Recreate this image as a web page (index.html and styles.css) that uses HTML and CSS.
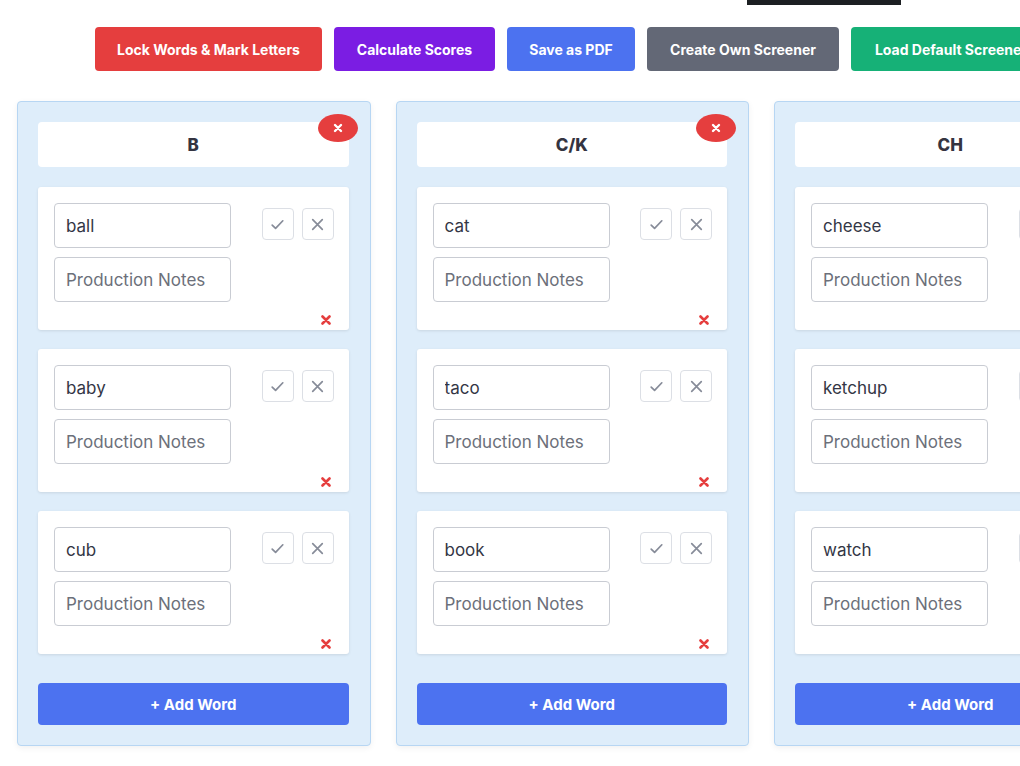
FILE: index.html
```html
<!DOCTYPE html>
<html lang="en">
<head>
<meta charset="UTF-8" />
<title>Articulation Screener</title>
<link rel="stylesheet" href="styles.css">
</head>
<body>

<div class="topbar"></div>

<!-- Acciones principales -->
<div class="toolbar">
  <button class="btn btn-red">Lock Words &amp; Mark Letters</button>
  <button class="btn btn-purple">Calculate Scores</button>
  <button class="btn btn-blue">Save as PDF</button>
  <button class="btn btn-gray">Create Own Screener</button>
  <button class="btn btn-green">Load Default Screener</button>
</div>

<div class="board" id="board"></div>

<template id="card-tpl">
  <div class="word-card">
    <div class="word-row">
      <div class="fields">
        <input class="field word" type="text" />
        <input class="field" type="text" placeholder="Production Notes" />
      </div>
      <div class="marks">
        <button class="mark" title="Correct">
          <svg viewBox="0 0 16 16"><path d="M3 8.5l3.2 3.2L13 4.5" fill="none" stroke="#878c99" stroke-width="1.6" stroke-linecap="round" stroke-linejoin="round"/></svg>
        </button>
        <button class="mark" title="Error">
          <svg viewBox="0 0 16 16"><path d="M3.5 3.5l9 9M12.5 3.5l-9 9" fill="none" stroke="#878c99" stroke-width="1.6" stroke-linecap="round"/></svg>
        </button>
      </div>
    </div>
    <div class="card-foot">
      <button class="del-word" title="Remove word">
        <svg viewBox="0 0 10 10"><path d="M1.5 1.5l7 7M8.5 1.5l-7 7" stroke="#e53e3e" stroke-width="2.6" stroke-linecap="round"/></svg>
      </button>
    </div>
  </div>
</template>

<script>
  // Datos del screener por defecto
  const sounds = [
    { label: 'B', words: ['ball', 'baby', 'cub'] },
    { label: 'C/K', words: ['cat', 'taco', 'book'] },
    { label: 'CH', words: ['cheese', 'ketchup', 'watch'] }
  ];

  const board = document.getElementById('board');
  const tpl = document.getElementById('card-tpl');

  sounds.forEach(sound => {
    const col = document.createElement('div');
    col.className = 'column';

    const head = document.createElement('div');
    head.className = 'col-head';
    head.innerHTML = `<span>${sound.label}</span>
      <button class="del-col" title="Remove sound">
        <svg viewBox="0 0 10 10"><path d="M2 2l6 6M8 2l-6 6" stroke="#fff" stroke-width="2.4" stroke-linecap="round"/></svg>
      </button>`;
    col.appendChild(head);

    sound.words.forEach(w => {
      const card = tpl.content.cloneNode(true);
      card.querySelector('.word').value = w;
      col.appendChild(card);
    });

    const add = document.createElement('button');
    add.className = 'add-word';
    add.textContent = '+ Add Word';
    col.appendChild(add);

    board.appendChild(col);
  });
</script>

</body>
</html>
```

FILE: styles.css
```css
* {
  margin: 0;
  padding: 0;
  box-sizing: border-box;
}
body {
  font-family: Inter, 'Noto Sans', sans-serif;
  background: #fff;
  color: #333645;
  overflow: hidden;
  width: 1020px;
  height: 766px;
}

.topbar {
  margin-left: 747px;
  width: 154px;
  height: 5px;
  background: #1c1f22;
}

/* Barra de botones */
.toolbar {
  display: flex;
  gap: 12px;
  margin-top: 22px;
  padding-left: 95px;
  white-space: nowrap;
}
.btn {
  flex: none;
  height: 44px;
  padding: 0 22px;
  border: none;
  border-radius: 4px;
  color: #fff;
  font-family: Inter, sans-serif;
  font-weight: 700;
  font-size: 14px;
  cursor: pointer;
}
.btn-red { background: #e53e3e; width: 227px; }
.btn-purple { background: #7b1de3; width: 161px; }
.btn-blue { background: #4c72f0; width: 128px; }
.btn-gray { background: #636876; width: 192px; }
.btn-green { background: #16b177; width: 200px; }

/* Columnas */
.board {
  display: flex;
  gap: 25px;
  margin-top: 30px;
  padding-left: 17px;
}
.column {
  flex: 0 0 353.5px;
  display: flex;
  flex-direction: column;
  background: #deedfa;
  border: 1px solid #b7d6f3;
  border-radius: 4px;
  padding: 20px 21px 20px 20px;
  box-shadow: 0 2px 6px rgba(0, 0, 0, 0.06);
}

.col-head {
  position: relative;
  height: 45px;
  background: #fff;
  border-radius: 4px;
  display: flex;
  align-items: center;
  justify-content: center;
  font-family: Inter, sans-serif;
  font-weight: 800;
  font-size: 17px;
  color: #343441;
}
.del-col {
  position: absolute;
  top: -8px;
  right: -9px;
  width: 40px;
  height: 28px;
  border: none;
  border-radius: 50%;
  background: #e53e3e;
  display: flex;
  align-items: center;
  justify-content: center;
  cursor: pointer;
}
.del-col svg {
  width: 10px;
  height: 10px;
}

/* Tarjeta de palabra */
.word-card {
  background: #fff;
  border-radius: 3px;
  box-shadow: 0 1px 3px rgba(0, 0, 0, 0.1);
  padding: 16px 15px 0 16px;
  height: 143px;
  margin-top: 19px;
}
.col-head + .word-card {
  margin-top: 20px;
}
.word-row {
  display: flex;
}
.fields {
  display: flex;
  flex-direction: column;
  gap: 9px;
  width: 177px;
}
.field {
  height: 45px;
  border: 1px solid #c9ccd3;
  border-radius: 4px;
  padding: 0 11px;
  font-family: Inter, sans-serif;
  font-size: 17px;
  color: #333645;
  outline: none;
}
.field::placeholder {
  color: #6c707a;
}
.marks {
  display: flex;
  gap: 8px;
  margin-left: auto;
  margin-top: 5px;
  align-self: flex-start;
}
.mark {
  width: 32px;
  height: 32px;
  background: #fff;
  border: 1px solid #dcdfe5;
  border-radius: 4px;
  display: flex;
  align-items: center;
  justify-content: center;
  cursor: pointer;
}
.mark svg {
  width: 17px;
  height: 17px;
}

.card-foot {
  display: flex;
  justify-content: flex-end;
  padding-top: 13px;
  padding-right: 3px;
}
.del-word {
  background: none;
  border: none;
  width: 10px;
  height: 10px;
  display: flex;
  cursor: pointer;
}
.del-word svg {
  width: 10px;
  height: 10px;
}

.add-word {
  margin-top: 29px;
  height: 42px;
  border: none;
  border-radius: 4px;
  background: #4c72f0;
  color: #fff;
  font-family: Inter, sans-serif;
  font-weight: 700;
  font-size: 15px;
  cursor: pointer;
}
```
